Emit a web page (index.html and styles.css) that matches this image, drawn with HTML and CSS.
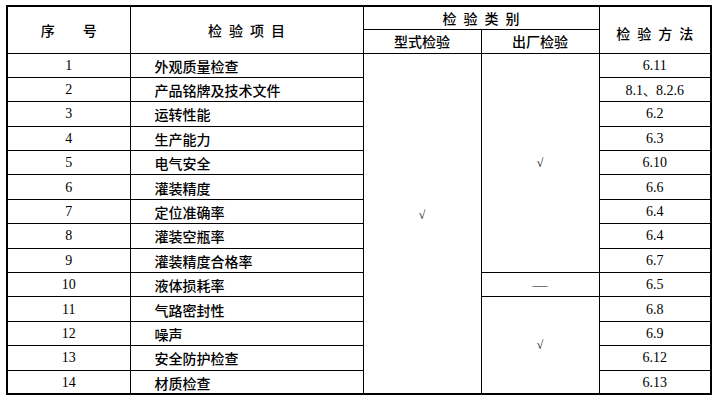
FILE: index.html
```html
<!DOCTYPE html>
<html lang="zh">
<head>
<meta charset="utf-8">
<title>检验项目</title>
<link rel="stylesheet" href="styles.css">
</head>
<body>
<table class="spec">
  <colgroup>
    <col class="c-no">
    <col class="c-item">
    <col class="c-type">
    <col class="c-out">
    <col class="c-method">
  </colgroup>
  <thead>
    <tr class="h1">
      <th rowspan="2"><span class="pair"><span>序</span><span>号</span></span></th>
      <th rowspan="2" class="spaced">检验项目</th>
      <th colspan="2" class="spaced">检验类别</th>
      <th rowspan="2" class="spaced low">检验方法</th>
    </tr>
    <tr class="h2">
      <th>型式检验</th>
      <th>出厂检验</th>
    </tr>
  </thead>
  <tbody>
    <tr><td class="num">1</td><td class="item">外观质量检查</td><td rowspan="14" class="mark up">√</td><td rowspan="9" class="mark">√</td><td class="num">6.11</td></tr>
    <tr><td class="num">2</td><td class="item">产品铭牌及技术文件</td><td class="num">8.1<span class="cjk">、</span>8.2.6</td></tr>
    <tr><td class="num">3</td><td class="item">运转性能</td><td class="num">6.2</td></tr>
    <tr><td class="num">4</td><td class="item">生产能力</td><td class="num">6.3</td></tr>
    <tr><td class="num">5</td><td class="item">电气安全</td><td class="num">6.10</td></tr>
    <tr><td class="num">6</td><td class="item">灌装精度</td><td class="num">6.6</td></tr>
    <tr><td class="num">7</td><td class="item">定位准确率</td><td class="num">6.4</td></tr>
    <tr><td class="num">8</td><td class="item">灌装空瓶率</td><td class="num">6.4</td></tr>
    <tr><td class="num">9</td><td class="item">灌装精度合格率</td><td class="num">6.7</td></tr>
    <tr><td class="num">10</td><td class="item">液体损耗率</td><td class="mark dash">—</td><td class="num">6.5</td></tr>
    <tr><td class="num">11</td><td class="item">气路密封性</td><td rowspan="4" class="mark">√</td><td class="num">6.8</td></tr>
    <tr><td class="num">12</td><td class="item">噪声</td><td class="num">6.9</td></tr>
    <tr><td class="num">13</td><td class="item">安全防护检查</td><td class="num">6.12</td></tr>
    <tr><td class="num">14</td><td class="item">材质检查</td><td class="num">6.13</td></tr>
  </tbody>
</table>
</body>
</html>
```

FILE: styles.css
```css
html, body {
  margin: 0;
  padding: 0;
  background: #ffffff;
}

body {
  color: #000000;
  font-family: "Noto Sans CJK SC", sans-serif;
}

.spec {
  margin: 5px 0 0 6px;
  width: 704px;
  table-layout: fixed;
  border-collapse: collapse;
  border: 2px solid #000000;
}

.c-no { width: 123px; }
.c-item { width: 233px; }
.c-type { width: 118px; }
.c-out { width: 118px; }
.c-method { width: 112px; }

.spec th,
.spec td {
  border: 1px solid #000000;
  padding: 0;
  text-align: center;
  vertical-align: middle;
  font-size: 14px;
  line-height: 16px;
  font-weight: 500;
}

.h1 { height: 23px; }
.h2 { height: 24px; }

.spec tbody tr { height: 24.4px; }

.spec th.spaced {
  letter-spacing: 7px;
  text-indent: 7px;
}

.spec th.low {
  padding-top: 6px;
}

.pair {
  display: inline-flex;
  gap: 28px;
}

.spec td.item {
  text-align: left;
  padding-left: 24px;
  padding-top: 1px;
}

.spec td.num {
  font-family: "Liberation Serif", "Times New Roman", serif;
  font-size: 14px;
  font-weight: normal;
  padding-top: 1px;
}

.spec td .cjk {
  font-family: "Noto Sans CJK SC", sans-serif;
  font-size: 13px;
}

.spec td.mark {
  font-family: "Liberation Serif", serif;
  font-size: 12px;
  font-weight: normal;
}

.spec td.up {
  padding-bottom: 16px;
}

.spec td.dash {
  font-size: 15px;
}
```
